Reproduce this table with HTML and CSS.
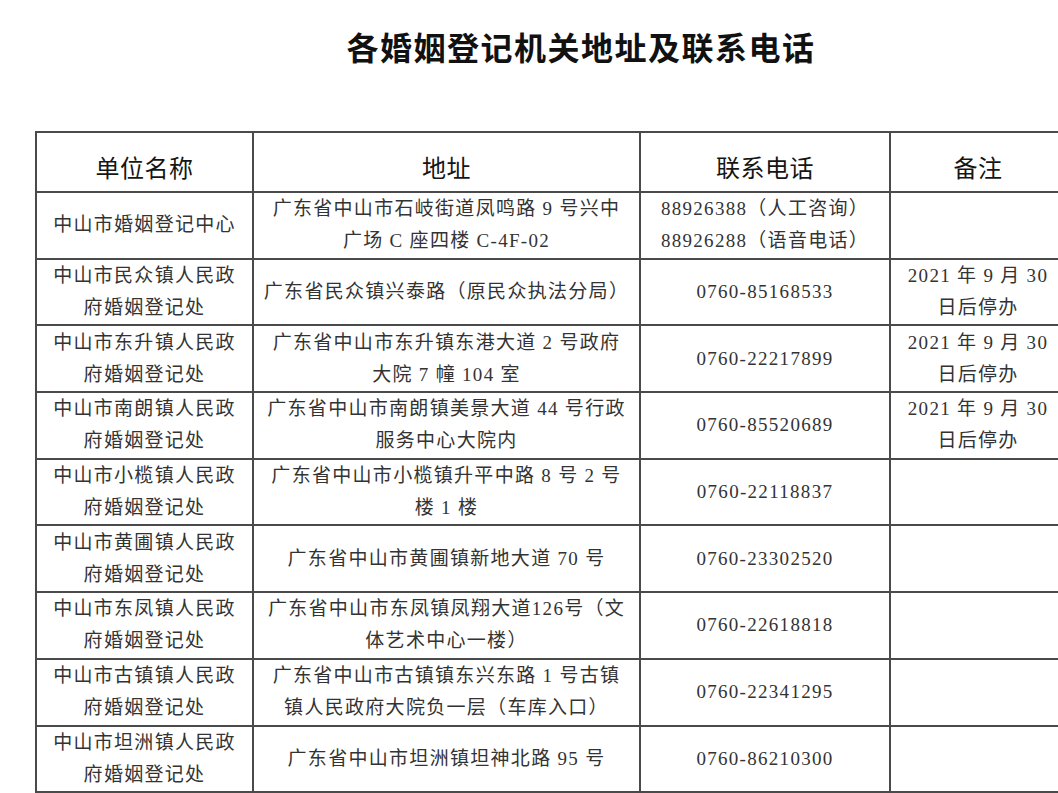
FILE: index.html
```html
<!DOCTYPE html>
<html lang="zh-CN">
<head>
<meta charset="utf-8">
<title>各婚姻登记机关地址及联系电话</title>
<link rel="stylesheet" href="styles.css">
</head>
<body>
<div class="page">
  <h1 class="title">各婚姻登记机关地址及联系电话</h1>
  <table class="grid">
    <colgroup>
      <col class="c-name"><col class="c-addr"><col class="c-tel"><col class="c-note">
    </colgroup>
    <thead>
      <tr class="head-row">
        <th>单位名称</th><th>地址</th><th>联系电话</th><th>备注</th>
      </tr>
    </thead>
    <tbody>
      <tr>
        <td>中山市婚姻登记中心</td>
        <td>广东省中山市石岐街道凤鸣路 9 号兴中<br>广场 C 座四楼 C-4F-02</td>
        <td>88926388（人工咨询）<br>88926288（语音电话）</td>
        <td></td>
      </tr>
      <tr>
        <td>中山市民众镇人民政<br>府婚姻登记处</td>
        <td>广东省民众镇兴泰路（原民众执法分局）</td>
        <td>0760-85168533</td>
        <td>2021 年 9 月 30<br>日后停办</td>
      </tr>
      <tr>
        <td>中山市东升镇人民政<br>府婚姻登记处</td>
        <td>广东省中山市东升镇东港大道 2 号政府<br>大院 7 幢 104 室</td>
        <td>0760-22217899</td>
        <td>2021 年 9 月 30<br>日后停办</td>
      </tr>
      <tr>
        <td>中山市南朗镇人民政<br>府婚姻登记处</td>
        <td>广东省中山市南朗镇美景大道 44 号行政<br>服务中心大院内</td>
        <td>0760-85520689</td>
        <td>2021 年 9 月 30<br>日后停办</td>
      </tr>
      <tr>
        <td>中山市小榄镇人民政<br>府婚姻登记处</td>
        <td>广东省中山市小榄镇升平中路 8 号 2 号<br>楼 1 楼</td>
        <td>0760-22118837</td>
        <td></td>
      </tr>
      <tr>
        <td>中山市黄圃镇人民政<br>府婚姻登记处</td>
        <td>广东省中山市黄圃镇新地大道 70 号</td>
        <td>0760-23302520</td>
        <td></td>
      </tr>
      <tr>
        <td>中山市东凤镇人民政<br>府婚姻登记处</td>
        <td>广东省中山市东凤镇凤翔大道126号（文<br>体艺术中心一楼）</td>
        <td>0760-22618818</td>
        <td></td>
      </tr>
      <tr>
        <td>中山市古镇镇人民政<br>府婚姻登记处</td>
        <td>广东省中山市古镇镇东兴东路 1 号古镇<br>镇人民政府大院负一层（车库入口）</td>
        <td>0760-22341295</td>
        <td></td>
      </tr>
      <tr>
        <td>中山市坦洲镇人民政<br>府婚姻登记处</td>
        <td>广东省中山市坦洲镇坦神北路 95 号</td>
        <td>0760-86210300</td>
        <td></td>
      </tr>
    </tbody>
  </table>
</div>
</body>
</html>
```

FILE: styles.css
```css
html, body {
  margin: 0;
  padding: 0;
  background: #ffffff;
  overflow: hidden;
}

.page {
  width: 1100px;
  height: 793px;
  font-family: "Liberation Serif", "Noto Sans CJK SC", serif;
  color: #333333;
}

.title {
  margin: 0;
  width: 1058px;
  box-sizing: border-box;
  padding: 25px 0 0 104px;
  height: 131px;
  text-align: center;
  font-family: "Noto Sans CJK SC", sans-serif;
  font-weight: 700;
  font-size: 32px;
  line-height: 42px;
  letter-spacing: 1.5px;
  color: #111;
}

.grid {
  margin-left: 35px;
  width: 1030px;
  border-collapse: collapse;
  table-layout: fixed;
}

.c-name { width: 217px; }
.c-addr { width: 387px; }
.c-tel  { width: 250px; }
.c-note { width: 176px; }

.grid th,
.grid td {
  border: 2px solid #4a4a4a;
  padding: 0;
  text-align: center;
  vertical-align: middle;
}

.grid th {
  height: 50px;
  padding-top: 8px;
  font-family: "Noto Sans CJK SC", sans-serif;
  font-weight: 400;
  font-size: 24px;
  letter-spacing: 0.5px;
  color: #151515;
}

.grid td {
  height: 64.7px;
  font-size: 19px;
  line-height: 32px;
  letter-spacing: 1.3px;
  white-space: nowrap;
}
```
